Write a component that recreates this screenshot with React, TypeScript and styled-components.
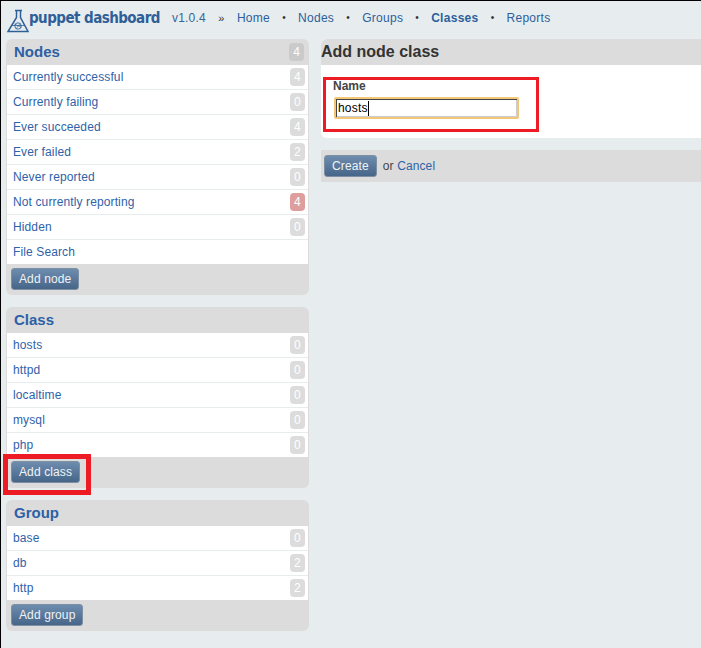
import React from "react";
import styled, { createGlobalStyle } from "styled-components";

const Global = createGlobalStyle`
  html, body { margin: 0; padding: 0; height: 100%; }
  body { background: #e7ecef; font-family: "Liberation Sans", Arial, sans-serif; font-size: 12px; color: #333; overflow: hidden; }
  #root { height: 100%; }
`;

const Page = styled.div`
  position: relative;
  width: 701px;
  height: 648px;
  box-sizing: border-box;
  border-top: 1px solid #000;
  border-left: 1px solid #000;
  overflow: hidden;
`;

const Header = styled.header`
  display: flex;
  align-items: center;
  height: 38px;
  padding: 0 0 5px 6px;
  box-sizing: border-box;
`;

const Brand = styled.div`
  display: flex;
  align-items: center;
  width: 165px;
  margin-top: 3px;
`;

const LogoMark = styled.svg`
  flex: none;
  margin-top: 2px;
  margin-bottom: -2px;
`;

const BrandName = styled.span`
  font-family: "DejaVu Sans Condensed", "DejaVu Sans", sans-serif;
  font-weight: 700;
  font-size: 15px;
  letter-spacing: -0.55px;
  line-height: 20px;
  color: #2f5f97;
  margin-top: -2px;
  white-space: nowrap;
`;

const Version = styled.span`
  font-size: 12px;
  letter-spacing: 0.2px;
  color: #3a6496;
  white-space: nowrap;
`;

const Nav = styled.nav`
  display: flex;
  align-items: center;
  font-size: 12px;
  letter-spacing: 0.28px;
`;

const Lead = styled.span`
  color: #333;
  font-size: 11px;
  width: 17px;
  margin: 0 7px 0 7px;
  text-align: center;
`;

const Sep = styled.span`
  color: #333;
  font-size: 10px;
  width: 28px;
  text-align: center;
`;

const NavLink = styled.a<{ $active?: boolean }>`
  color: #2d5f9c;
  font-weight: ${(p) => (p.$active ? 700 : 400)};
  white-space: nowrap;
`;

const Columns = styled.div`
  display: flex;
  align-items: flex-start;
  padding-left: 5px;
  gap: 12px;
`;

const Sidebar = styled.aside`
  width: 303px;
  flex: none;
  display: flex;
  flex-direction: column;
  gap: 12px;
`;

const Panel = styled.section`
  background: #dcdcdc;
  border-radius: 6px;
  padding: 0 1px;
  overflow: hidden;
`;

const PanelHead = styled.div`
  display: flex;
  align-items: center;
  justify-content: space-between;
  height: 26px;
  padding: 0 4px 0 7px;
`;

const PanelTitle = styled.h2`
  margin: 0 0 2px;
  font-size: 15px;
  font-weight: 700;
  color: #2d60a4;
`;

const Row = styled.a<{ $last?: boolean }>`
  display: flex;
  align-items: center;
  justify-content: space-between;
  height: ${(p) => (p.$last ? "24px" : "25px")};
  box-sizing: border-box;
  background: #fff;
  border-bottom: ${(p) => (p.$last ? "none" : "1px solid #e7ecef")};
  padding: 0 3px 0 6px;
  color: #2f62a8;
  font-size: 12px;
  letter-spacing: 0.12px;
`;

const Badge = styled.span<{ $alert?: boolean; $head?: boolean }>`
  display: flex;
  align-items: center;
  justify-content: center;
  width: 15px;
  height: 18px;
  border-radius: 4px;
  color: #fff;
  font-size: 12px;
  background: ${(p) => (p.$alert ? "#df9e9e" : p.$head ? "#cacaca" : "#dcdcdc")};
`;

const PanelFoot = styled.div`
  height: 31px;
  padding: 4px 0 0 4px;
  box-sizing: border-box;
`;

const Button = styled.button`
  height: 22px;
  padding: 0 7px;
  margin: 0;
  border: 1px solid #7f8fa3;
  border-radius: 3px;
  background: linear-gradient(#6d8cae, #466689);
  color: #f0f3f6;
  font-family: "Liberation Sans", Arial, sans-serif;
  font-size: 12px;
  letter-spacing: 0.12px;
  line-height: 20px;
`;

const Main = styled.main`
  flex: 1;
  margin-right: -20px;
  min-width: 0;
`;

const MainCard = styled.section`
  border-radius: 6px 0 0 6px;
  overflow: hidden;
  background: #fff;
`;

const MainHead = styled.div`
  height: 26px;
  background: #dcdcdc;
  display: flex;
  align-items: center;
`;

const MainTitle = styled.h1`
  margin: 0;
  font-size: 16px;
  font-weight: 700;
  color: #333;
`;

const Form = styled.form`
  height: 73px;
  padding: 14px 0 0 12px;
  box-sizing: border-box;
`;

const Label = styled.label`
  display: block;
  font-size: 12px;
  font-weight: 700;
  line-height: 14px;
  color: #444;
  margin-bottom: 4px;
`;

const InputBox = styled.div`
  width: 185px;
  height: 22px;
  margin-left: 1px;
  box-sizing: border-box;
  border: 2px solid #f2c878;
  border-radius: 2px;
  background: #fff;
  box-shadow: inset 1px 1px 0 #444, inset -1px -1px 0 #ccc;
  display: flex;
  align-items: center;
  padding-left: 2px;
  font-size: 12px;
  letter-spacing: 0.2px;
  color: #000;
`;

const Caret = styled.span`
  display: inline-block;
  width: 1px;
  height: 15px;
  background: #000;
`;

const Actions = styled.div`
  margin-top: 12px;
  height: 32px;
  box-sizing: border-box;
  background: #dcdcdc;
  padding: 5px 0 0 3px;
  display: flex;
  align-items: flex-start;
  gap: 6px;
  font-size: 12px;
  letter-spacing: 0.12px;
  line-height: 22px;
  color: #444;
`;

const CancelLink = styled.a`
  color: #2f62a8;
`;

const Highlight = styled.div<{ $x: number; $y: number; $w: number; $h: number; $t: number }>`
  position: absolute;
  left: ${(p) => p.$x}px;
  top: ${(p) => p.$y}px;
  width: ${(p) => p.$w}px;
  height: ${(p) => p.$h}px;
  box-sizing: border-box;
  border: ${(p) => p.$t}px solid #ed1c24;
  pointer-events: none;
`;

const Logo = () => (
  <LogoMark width="22" height="24" viewBox="0 0 22 24" fill="none" stroke="#2f5f97">
    <path d="M8 1.5h7M9.5 2v6.5L1 22.5h20L13.5 8.5V2" strokeWidth="1.5" />
    <path d="M5 16.5h12" strokeWidth="0.8" />
    <circle cx="11" cy="17" r="3.2" strokeWidth="0.9" />
    <path d="M9 20l4-5.5M7.5 15l7 3.5" strokeWidth="0.6" />
  </LogoMark>
);

type Item = { label: string; count?: number; alert?: boolean };

const nodes: Item[] = [
  { label: "Currently successful", count: 4 },
  { label: "Currently failing", count: 0 },
  { label: "Ever succeeded", count: 4 },
  { label: "Ever failed", count: 2 },
  { label: "Never reported", count: 0 },
  { label: "Not currently reporting", count: 4, alert: true },
  { label: "Hidden", count: 0 },
  { label: "File Search" },
];
const classes: Item[] = ["hosts", "httpd", "localtime", "mysql", "php"].map((label) => ({ label, count: 0 }));
const groups: Item[] = [
  { label: "base", count: 0 },
  { label: "db", count: 2 },
  { label: "http", count: 2 },
];

const SidePanel = ({ title, total, items, action }: { title: string; total?: number; items: Item[]; action: string }) => (
  <Panel>
    <PanelHead>
      <PanelTitle>{title}</PanelTitle>
      {total !== undefined && <Badge $head>{total}</Badge>}
    </PanelHead>
    {items.map((it, i) => (
      <Row key={it.label} $last={i === items.length - 1}>
        {it.label}
        {it.count !== undefined && <Badge $alert={it.alert}>{it.count}</Badge>}
      </Row>
    ))}
    <PanelFoot>
      <Button type="button">{action}</Button>
    </PanelFoot>
  </Panel>
);

export default function App() {
  return (
    <Page>
      <Global />
      <Header>
        <Brand>
          <Logo />
          <BrandName>puppet dashboard</BrandName>
        </Brand>
        <Version>v1.0.4</Version>
        <Nav>
          <Lead>»</Lead>
          <NavLink>Home</NavLink>
          <Sep>•</Sep>
          <NavLink>Nodes</NavLink>
          <Sep>•</Sep>
          <NavLink>Groups</NavLink>
          <Sep>•</Sep>
          <NavLink $active>Classes</NavLink>
          <Sep>•</Sep>
          <NavLink>Reports</NavLink>
        </Nav>
      </Header>
      <Columns>
        <Sidebar>
          <SidePanel title="Nodes" total={4} items={nodes} action="Add node" />
          <SidePanel title="Class" items={classes} action="Add class" />
          <SidePanel title="Group" items={groups} action="Add group" />
        </Sidebar>
        <Main>
          <MainCard>
            <MainHead>
              <MainTitle>Add node class</MainTitle>
            </MainHead>
            <Form>
              <Label>Name</Label>
              <InputBox>
                hosts
                <Caret />
              </InputBox>
            </Form>
          </MainCard>
          <Actions>
            <Button type="button">Create</Button>
            <span>
              or <CancelLink>Cancel</CancelLink>
            </span>
          </Actions>
        </Main>
      </Columns>
      <Highlight $x={322} $y={76} $w={216} $h={55} $t={3} />
      <Highlight $x={2} $y={453} $w={88} $h={41} $t={5} />
    </Page>
  );
}
